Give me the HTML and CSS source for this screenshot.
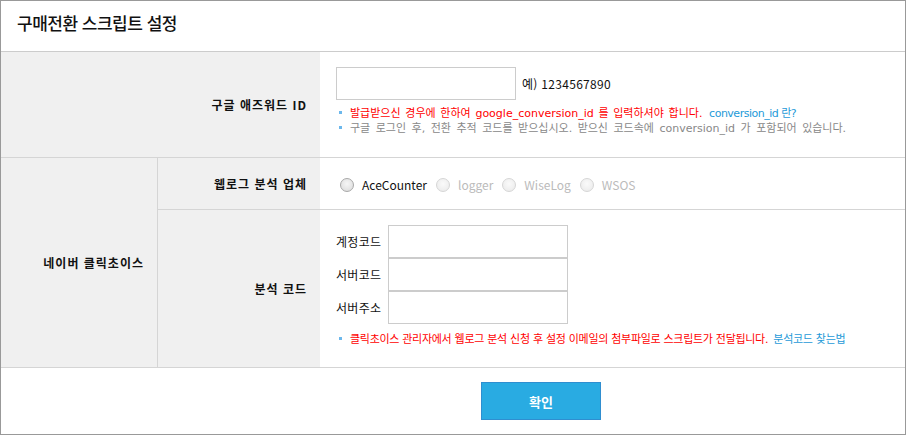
FILE: index.html
```html
<!DOCTYPE html>
<html lang="ko">
<head>
<meta charset="utf-8">
<title>구매전환 스크립트 설정</title>
<link rel="stylesheet" href="styles.css">
</head>
<body>
<div class="panel">
  <div class="header"><h1 class="title">구매전환 스크립트 설정</h1></div>
  <div class="form">
    <div class="label span2 row1">구글 애즈워드 ID</div>
    <div class="content row1c">
      <div class="id-line">
        <span class="input input-id"></span>
        <span class="example">예) 1234567890</span>
      </div>
      <ul class="notes">
        <li class="red wide">발급받으신 경우에 한하여 google_conversion_id 를 입력하셔야 합니다. <a class="link link-tight">conversion_id 란?</a></li>
        <li class="gray">구글 로그인 후, 전환 추적 코드를 받으십시오. 받으신 코드속에 conversion_id 가 포함되어 있습니다.</li>
      </ul>
    </div>

    <div class="label group">네이버 클릭초이스</div>
    <div class="sub">
      <div class="subrow subrow-a">
        <div class="label sublabel">웹로그 분석 업체</div>
        <div class="content radios">
          <label class="radio"><span class="dot"></span><span class="rtext">AceCounter</span></label>
          <label class="radio disabled"><span class="dot"></span><span class="rtext">logger</span></label>
          <label class="radio disabled"><span class="dot"></span><span class="rtext">WiseLog</span></label>
          <label class="radio disabled"><span class="dot"></span><span class="rtext">WSOS</span></label>
        </div>
      </div>
      <div class="subrow subrow-b">
        <div class="label sublabel">분석 코드</div>
        <div class="content codes">
          <div class="code-grid">
            <span class="clabel">계정코드</span><span class="input"></span>
            <span class="clabel">서버코드</span><span class="input"></span>
            <span class="clabel">서버주소</span><span class="input"></span>
          </div>
          <ul class="notes notes-b">
            <li class="red tight">클릭초이스 관리자에서 웹로그 분석 신청 후 설정 이메일의 첨부파일로 스크립트가 전달됩니다. <a class="link">분석코드 찾는법</a></li>
          </ul>
        </div>
      </div>
    </div>
  </div>
  <div class="footer"><button class="btn" type="button">확인</button></div>
</div>
</body>
</html>
```
FILE: styles.css
```css
* { box-sizing: border-box; }
html, body { margin: 0; padding: 0; background: #fff; }
body {
  font-family: "Noto Sans CJK KR", "Noto Sans", sans-serif;
  font-size: 12px;
  color: #111;
}
.panel {
  width: 906px;
  height: 435px;
  border: 1px solid #999;
  display: flex;
  flex-direction: column;
}
.header {
  height: 51px;
  border-bottom: 1px solid #ccc;
  display: flex;
  align-items: center;
  padding-left: 16px;
  padding-bottom: 6px;
}
.title {
  margin: 0;
  font-size: 17px;
  font-weight: 500;
  line-height: 20px;
  color: #111;
  letter-spacing: -0.5px;
}
.form {
  display: grid;
  grid-template-columns: 157px 162px 1fr;
  grid-template-rows: 106px 209px;
  border-bottom: 1px solid #d5d5d5;
}
.label {
  background: #f0f0f0;
  display: flex;
  align-items: center;
  justify-content: flex-end;
  padding-right: 13px;
  font-weight: bold;
  line-height: 15px;
  letter-spacing: 1px;
  color: #111;
}
.span2 { grid-column: 1 / 3; }
.row1, .row1c { border-bottom: 1px solid #d5d5d5; }
.content { padding-left: 16px; }
.row1c { padding-top: 15px; }
.id-line { display: flex; align-items: center; gap: 6px; }
.input {
  display: block;
  width: 180px;
  height: 33px;
  border: 1px solid #ccc;
  background: #fff;
}
.example { font-size: 12px; color: #111; line-height: 15px; letter-spacing: 0.3px; }
.notes {
  list-style: none;
  margin: 6px 0 0;
  padding: 0;
  font-family: "DejaVu Sans", "Noto Sans CJK KR", sans-serif;
}
.notes li {
  position: relative;
  padding-left: 14px;
  line-height: 15px;
  font-size: 11px;
  white-space: nowrap;
}
.notes li::before {
  content: "";
  position: absolute;
  left: 3px;
  top: 5px;
  width: 3px;
  height: 3px;
  background: #6cb8ec;
}
.red { color: #f00; }
.gray { color: #888; word-spacing: 2px; }
.wide { word-spacing: 1.2px; }
.tight { letter-spacing: -0.3px; }
.link { color: #1e9ad8; margin-left: 2px; }
.link-tight { letter-spacing: -0.5px; word-spacing: 0; }
.group { border-right: 1px solid #d5d5d5; padding-right: 13px; }
.sub {
  grid-column: 2 / 4;
  display: flex;
  flex-direction: column;
}
.subrow { display: grid; grid-template-columns: 162px 1fr; }
.subrow-a { height: 52px; border-bottom: 1px solid #d5d5d5; }
.subrow-b { flex: 1; }
.radios { display: flex; align-items: center; padding-left: 20px; padding-top: 2px; }
.radio { display: flex; align-items: center; margin-right: 9px; }
.dot {
  width: 14px;
  height: 14px;
  border-radius: 50%;
  border: 1px solid #a8a8a8;
  background: radial-gradient(circle at 50% 40%, #f6f6f6 0%, #e2e2e2 70%, #d0d0d0 100%);
  margin-right: 8px;
}
.rtext { font-size: 12px; line-height: 15px; color: #111; }
.disabled .dot { border-color: #d6d6d6; background: radial-gradient(circle at 50% 40%, #fafafa 0%, #eeeeee 70%, #e6e6e6 100%); }
.disabled .rtext { color: #bbb; }
.codes { padding-top: 15px; }
.code-grid {
  display: grid;
  grid-template-columns: 52px 181px;
  align-items: center;
}
.clabel { font-size: 12px; line-height: 15px; color: #111; letter-spacing: 0.3px; }
.notes-b { margin-top: 8px; }
.footer {
  flex: 1;
  display: flex;
  align-items: center;
  justify-content: center;
  padding-left: 176px;
}
.btn {
  width: 120px;
  height: 38px;
  background: #29abe2;
  border: 1px solid #2f8ed0;
  color: #fff;
  font-family: "Noto Sans CJK KR", sans-serif;
  font-size: 13px;
  font-weight: bold;
  padding: 0;
}
```
